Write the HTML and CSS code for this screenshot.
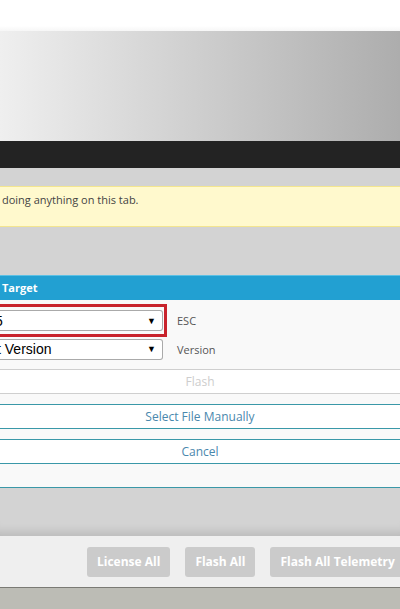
FILE: index.html
```html
<!DOCTYPE html>
<html>
<head>
<meta charset="utf-8">
<link rel="stylesheet" href="styles.css">
</head>
<body>
<div class="page">
  <div class="top"></div>
  <div class="banner"></div>
  <div class="tabs"></div>
  <div class="content">
    <div class="note">doing anything on this tab.</div>
    <div class="panel">
      <div class="panel-head">Target</div>
      <div class="panel-body">
        <div class="field">
          <div class="hl">
            <div class="sel"><span class="sel-text first">5</span><span class="arrow">&#9660;</span></div>
          </div>
          <span class="label">ESC</span>
        </div>
        <div class="field second">
          <div class="sel"><span class="sel-text">t Version</span><span class="arrow">&#9660;</span></div>
          <span class="label">Version</span>
        </div>
        <div class="btn-row disabled">Flash</div>
        <div class="btn-row active">Select File Manually</div>
        <div class="btn-row active">Cancel</div>
        <div class="panel-end"></div>
      </div>
    </div>
  </div>
  <div class="footer">
    <div class="fbtn">License All</div>
    <div class="fbtn">Flash All</div>
    <div class="fbtn">Flash All Telemetry</div>
  </div>
  <div class="status"></div>
</div>
</body>
</html>
```
FILE: styles.css
```css
html, body {
  margin: 0;
  padding: 0;
  overflow: hidden;
}
body {
  width: 400px;
  height: 609px;
  font-family: "Open Sans", "Liberation Sans", sans-serif;
}
.page {
  display: flex;
  flex-direction: column;
  height: 609px;
}
.top {
  flex: none;
  height: 31px;
  background: linear-gradient(to bottom, #ffffff 0, #ffffff 26px, #f6f6f6 31px);
}
.banner {
  flex: none;
  height: 110px;
  background: linear-gradient(to right, #efefef, #adadad);
}
.tabs {
  flex: none;
  height: 27px;
  background: #232323;
}
.content {
  flex: none;
  background: #d3d3d3;
  padding-top: 18px;
  height: 368px;
  box-sizing: border-box;
  box-shadow: inset 0 -12px 10px -8px rgba(0,0,0,0.12);
}
.note {
  height: 41px;
  box-sizing: border-box;
  background: #fff9cd;
  border-top: 1px solid #f3e58f;
  border-bottom: 1px solid #f3e58f;
  color: #444;
  font-size: 11px;
  line-height: 26px;
  padding: 0 0 0 2px;
}
.panel {
  margin-top: 48px;
}
.panel-head {
  height: 25px;
  box-sizing: border-box;
  background: #22a0d2;
  border-top: 1px solid #5cc0e4;
  color: #fff;
  font-weight: bold;
  font-size: 11px;
  line-height: 23px;
  padding-left: 2px;
}
.panel-body {
  background: #f9f9f9;
  padding-top: 4px;
  border-bottom: 1px solid #3a98a8;
}
.field {
  display: flex;
  align-items: center;
  gap: 10px;
  height: 33px;
}
.field.second {
  height: 20px;
  margin-top: 2px;
  gap: 14px;
}
.hl {
  border: 3px solid #c8232c;
  border-left: none;
  padding: 2px 1px 2px 0;
  box-sizing: border-box;
  height: 33px;
  display: flex;
  align-items: center;
}
.sel {
  width: 163px;
  height: 21px;
  box-sizing: border-box;
  border: 1px solid #aaa;
  border-left: none;
  border-radius: 0 3px 3px 0;
  background: #fff;
  display: flex;
  align-items: center;
  justify-content: space-between;
  font-family: "Liberation Sans", Arial, sans-serif;
  font-size: 14px;
  color: #000;
  overflow: hidden;
}
.sel-text {
  margin-left: -3px;
  white-space: nowrap;
}
.sel-text.first {
  margin-left: -5px;
}
.arrow {
  font-size: 9px;
  margin-right: 6px;
}
.label {
  font-size: 11px;
  color: #555;
}
.btn-row {
  height: 25px;
  box-sizing: border-box;
  background: #fff;
  text-align: center;
  font-size: 12px;
  line-height: 23px;
}
.btn-row.disabled {
  margin-top: 10px;
  border-top: 1px solid #cfcfcf;
  border-bottom: 1px solid #cfcfcf;
  color: #cdcdcd;
}
.btn-row.active {
  margin-top: 10px;
  border-top: 1px solid #3a98a8;
  border-bottom: 1px solid #3a98a8;
  color: #4a88ad;
}
.panel-end {
  height: 23px;
}
.footer {
  flex: none;
  height: 51px;
  box-sizing: border-box;
  background: #efefef;
  display: flex;
  align-items: center;
  gap: 15px;
  padding-left: 87px;
}
.fbtn {
  flex: none;
  height: 30px;
  box-sizing: border-box;
  background: #cbcbcb;
  border-radius: 3px;
  color: #fff;
  font-weight: bold;
  font-size: 12px;
  line-height: 30px;
  padding: 0 10px;
  white-space: nowrap;
}
.status {
  flex: 1;
  background: #bcbcb5;
  border-top: 1px solid #7a7a74;
}
```
